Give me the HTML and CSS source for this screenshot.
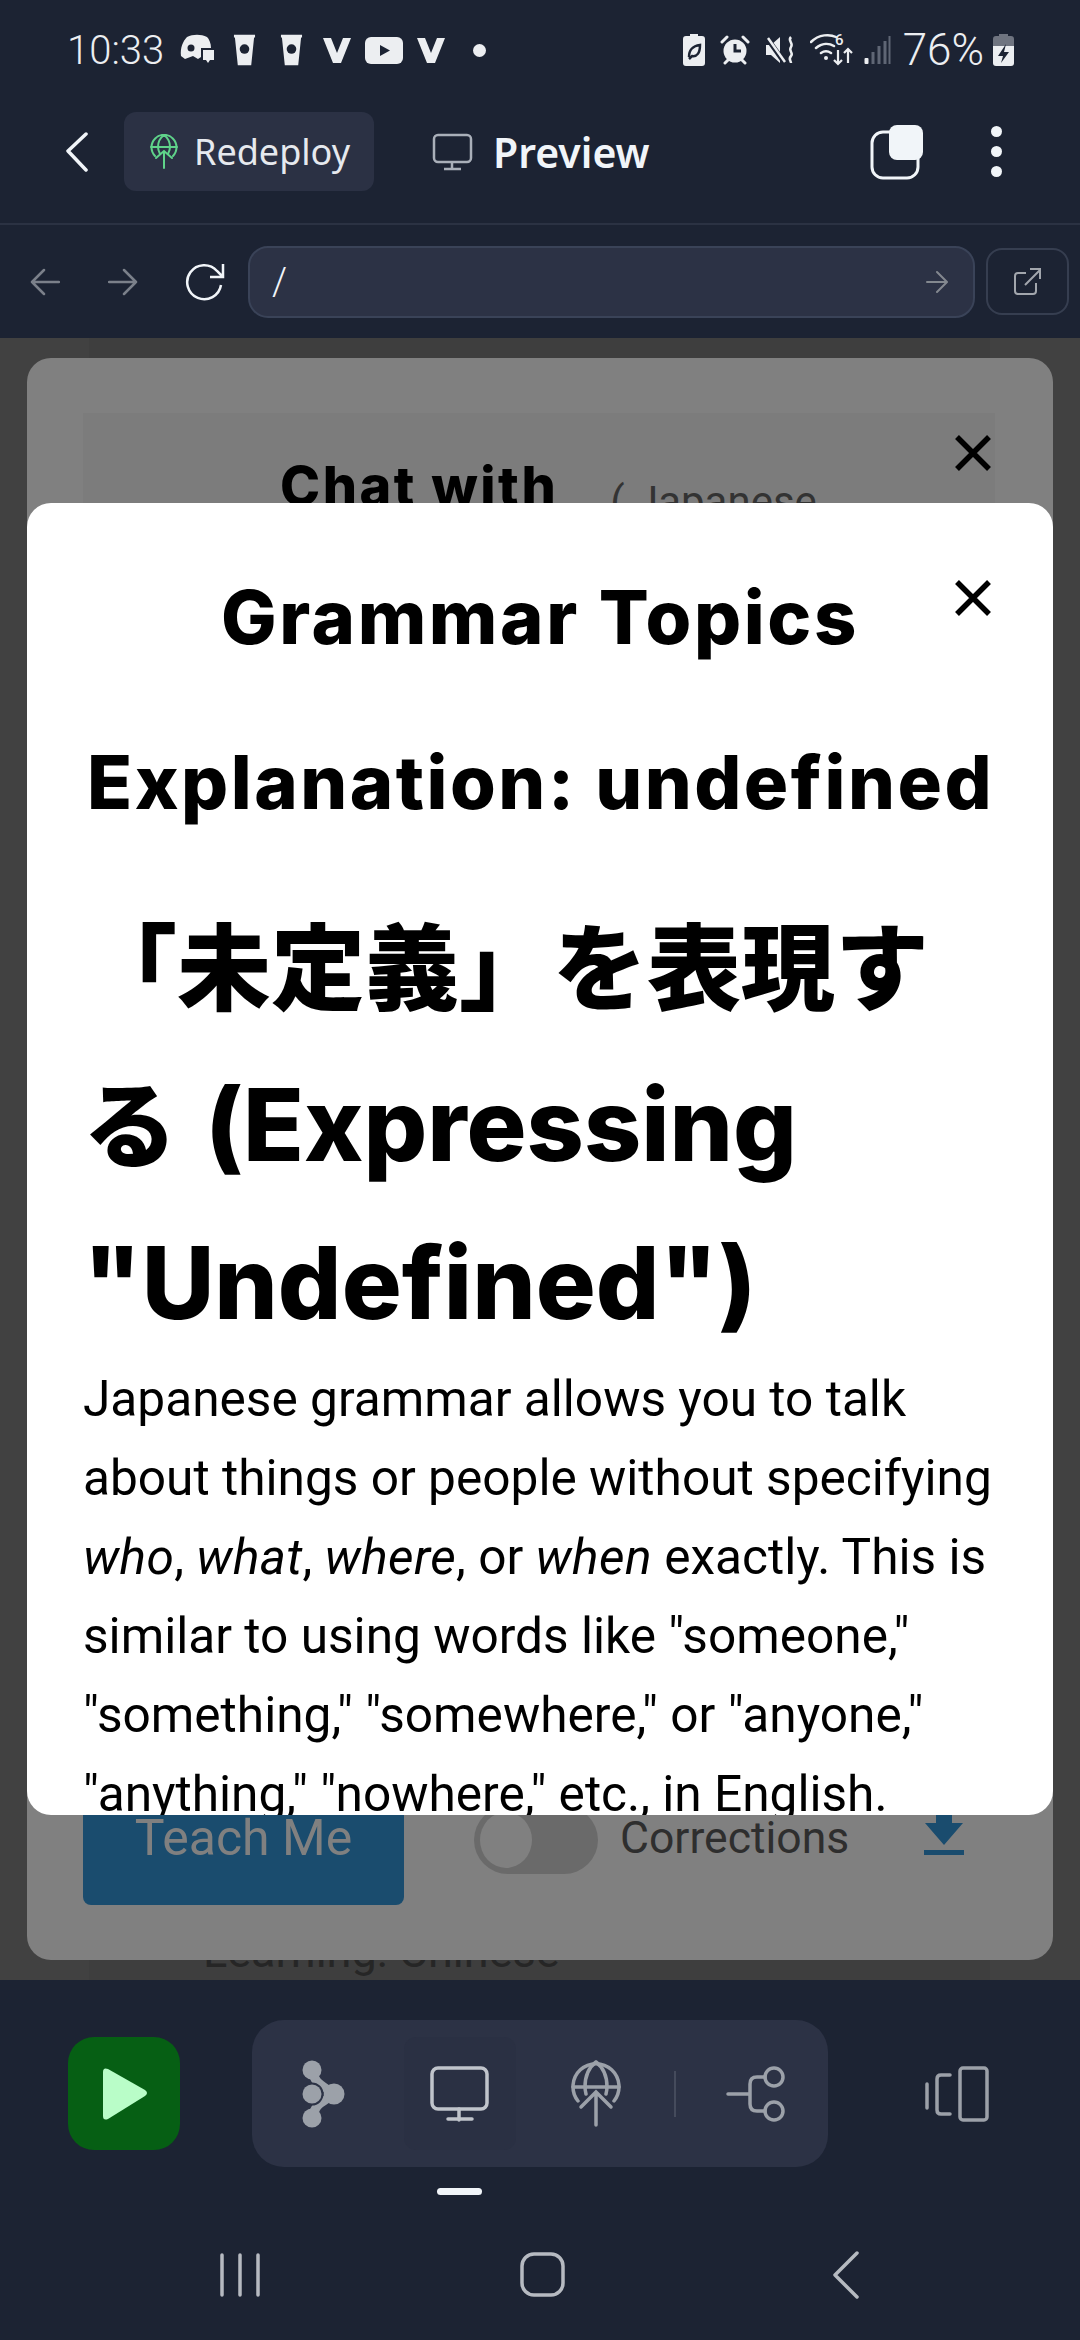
FILE: index.html
```html
<!DOCTYPE html>
<html lang="en">
<head>
  <meta charset="UTF-8" />
  <meta name="viewport" content="width=device-width, initial-scale=1.0" />
  <title>Grammar Topics</title>
  <link rel="stylesheet" href="styles.css">
</head>
<body>
  <div class="top">
    <div class="status">
      <span class="time">10:33</span>
      <div class="status-left">
        <svg width="34" height="32" viewBox="0 0 34 32"><path d="M7 3c6-3 14-3 20 0 2 2 4 6 4 11H21v9l-3 2-5-3-8 3-4-3C0 14 3 7 7 3z" fill="#eceef1"/><circle cx="11" cy="14" r="3.500" fill="#1c2333"/><path d="M23 16h11v10h-4l-2 3-2-3h-3z" fill="#eceef1"/></svg>
        <svg class="cup" width="23" height="34" viewBox="0 0 24 34"><path d="M1 1h22v3h-1l-3 29H5L2 4H1z" fill="#eceef1"/><circle cx="12" cy="16" r="5" fill="#1c2333"/></svg>
        <svg class="cup cup2" width="23" height="34" viewBox="0 0 24 34"><path d="M1 1h22v3h-1l-3 29H5L2 4H1z" fill="#eceef1"/><circle cx="12" cy="16" r="5" fill="#1c2333"/></svg>
        <svg class="vee" width="28" height="27" viewBox="0 0 28 27"><path d="M0 1h8l6 15 6-15h8L18 26h-8z" fill="#eceef1"/></svg>
        <svg width="38" height="27" viewBox="0 0 38 27"><rect width="38" height="27" rx="6" fill="#eceef1"/><path d="M15 8l10 5.500-10 5.500z" fill="#1c2333"/></svg>
        <svg width="28" height="27" viewBox="0 0 28 27"><path d="M0 1h8l6 15 6-15h8L18 26h-8z" fill="#eceef1"/></svg>
        <span class="dot"></span>
      </div>
      <div class="status-right">
        <svg width="22" height="32" viewBox="0 0 22 32"><path d="M7 0h8v2h4q3 0 3 3v24q0 3-3 3H3q-3 0-3-3V5q0-3 3-3h4z" fill="#eceef1"/><path d="M6 23c0-8 4-11 11-12 0 8-3 12-8 11l-3 3" fill="none" stroke="#1c2333" stroke-width="2.500"/></svg>
        <svg width="30" height="30" viewBox="0 0 30 30"><circle cx="15" cy="16" r="11.500" fill="#eceef1"/><path d="M15 9v7h6" fill="none" stroke="#1c2333" stroke-width="3"/><path d="M2 7l5-5M28 7l-5-5M5 28l3-3M25 28l-3-3" stroke="#eceef1" stroke-width="3" stroke-linecap="round"/></svg>
        <svg width="30" height="30" viewBox="0 0 30 30"><path d="M1 10h5l9-8v26l-9-8H1z" fill="#eceef1"/><path d="M2 3l17 24" stroke="#1c2333" stroke-width="5"/><path d="M3 3l17 24" stroke="#eceef1" stroke-width="2.500"/><path d="M26 2c-4 4 3 6 0 10s3 6 0 9 0 5 0 7" fill="none" stroke="#eceef1" stroke-width="2.500"/></svg>
        <svg class="wifi" width="44" height="34" viewBox="0 0 44 34"><path d="M1 9c8-8 19-8 25-5M6 15c6-5 13-5 18-2M11 20c3-2 7-2 10 0" fill="none" stroke="#eceef1" stroke-width="2.500" stroke-linecap="round"/><circle cx="16" cy="25" r="2" fill="#eceef1"/><text x="25" y="12" class="wifi-num">6</text><path d="M28 17v14m-4-4l4 4 4-4M38 30V16m-4 4l4-4 4 4" fill="none" stroke="#eceef1" stroke-width="2.200"/></svg>
        <svg class="signal" width="27" height="30" viewBox="0 0 26 30"><rect x="0" y="23" width="4" height="6" rx="1" fill="#eceef1"/><rect x="7" y="17" width="3" height="12" fill="#5f6675"/><rect x="13" y="11" width="3" height="18" fill="#5f6675"/><rect x="19" y="6" width="3" height="23" fill="#5f6675"/><rect x="24" y="1" width="2" height="28" fill="#5f6675"/></svg>
        <span class="pct">76%</span>
        <svg width="21" height="32" viewBox="0 0 21 32"><path d="M6 0h9v2h3q3 0 3 3v9H0V5q0-3 3-3h3z" fill="#6f7480"/><path d="M0 12h21v17q0 3-3 3H3q-3 0-3-3z" fill="#eceef1"/><path d="M13 10l-8 12h5l-2 7 8-11h-5z" fill="#1c2333"/></svg>
      </div>
    </div>

    <div class="header">
      <svg class="back" width="24" height="40" viewBox="0 0 24 40"><path d="M21 2L3 19l18 19" fill="none" stroke="#f1f5f9" stroke-width="3.500" stroke-linecap="round" stroke-linejoin="round"/></svg>
      <div class="redeploy">
        <svg width="28" height="36" viewBox="0 0 28 36"><g fill="none" stroke="#5fd38a" stroke-width="2" stroke-linecap="round"><path d="M5 22a12.500 12.500 0 1 1 18 0"/><path d="M1 13h26M14 1c-4 3-6 8-6 12 0 3 1 5 2 7M14 1c4 3 6 8 6 12 0 3-1 5-2 7"/><path d="M14 34V17M6 24l8-7 8 7"/></g></svg>
        <span>Redeploy</span>
      </div>
      <div class="preview">
        <svg width="42" height="38" viewBox="0 0 42 38"><rect x="2" y="2" width="37" height="27" rx="4" fill="none" stroke="#a9afb9" stroke-width="2.500"/><path d="M20 29v7M12 36h17" stroke="#a9afb9" stroke-width="2.500"/></svg>
        <span>Preview</span>
      </div>
      <div class="header-right">
        <svg width="54" height="56" viewBox="0 0 54 56"><rect x="2" y="8" width="46" height="46" rx="11" fill="none" stroke="#f1f5f9" stroke-width="3"/><rect x="19" y="1" width="34" height="35" rx="8" fill="#f1f5f9"/></svg>
        <div class="dots"><i></i><i></i><i></i></div>
      </div>
    </div>

    <div class="urlbar">
      <svg width="30" height="30" viewBox="0 0 30 30"><path d="M29 15H2M14 3L2 15l12 12" fill="none" stroke="#7b808a" stroke-width="2.500" stroke-linecap="round" stroke-linejoin="round"/></svg>
      <svg class="fwd" width="30" height="30" viewBox="0 0 30 30"><path d="M1 15h27M16 3l12 12-12 12" fill="none" stroke="#7b808a" stroke-width="2.500" stroke-linecap="round" stroke-linejoin="round"/></svg>
      <svg class="reload" width="42" height="38" viewBox="0 0 42 38"><path d="M37 22a17 17 0 1 1-4-14l6 6M39 1v13H26" fill="none" stroke="#f1f5f9" stroke-width="2.500"/></svg>
      <div class="address">
        <span>/</span>
        <svg width="22" height="24" viewBox="0 0 22 24"><path d="M1 12h19M11 2l10 10-10 10" fill="none" stroke="#83888f" stroke-width="2" stroke-linecap="round" stroke-linejoin="round"/></svg>
      </div>
      <div class="open-btn">
        <svg width="28" height="28" viewBox="0 0 28 28"><path d="M12 5H4q-3 0-3 3v15q0 3 3 3h15q3 0 3-3v-8M11 17L26 2M16 1h10v10" fill="none" stroke="#a2a6ad" stroke-width="2"/></svg>
      </div>
    </div>
  </div>

  <div class="stage">
    <div class="under-page"></div>
    <div class="under-text">Learning: Chinese</div>

    <div class="modal-back">
      <div class="back-inner">
        <span class="chat">Chat with</span>
        <span class="lang">( Japanese</span>
      </div>
      <svg class="close close-back" width="38" height="38" viewBox="0 0 38 38"><path d="M3 3l32 32M35 3L3 35" stroke="#000" stroke-width="5.500"/></svg>
      <div class="back-actions">
        <div class="teach">Teach Me</div>
        <div class="toggle"><span></span></div>
        <span class="corrections">Corrections</span>
        <svg class="download" width="40" height="50" viewBox="0 0 40 50"><path d="M12 0h16v17h11L20 39 1 17h11z" fill="#1a4c6e"/><rect y="44" width="40" height="5" fill="#1a4c6e"/></svg>
      </div>
    </div>

    <div class="modal-front">
      <svg class="close close-front" width="38" height="38" viewBox="0 0 38 38"><path d="M3 3l32 32M35 3L3 35" stroke="#000" stroke-width="5.500"/></svg>
      <div class="modal-title">Grammar Topics</div>
      <h2>Explanation: undefined</h2>
      <h1><span class="cjk">「未定義」を表現する</span> (Expressing "Undefined")</h1>
      <p>Japanese grammar allows you to talk about things or people without specifying <em>who</em>, <em>what</em>, <em>where</em>, or <em>when</em> exactly. This is similar to using words like "someone," "something," "somewhere," or "anyone," "anything," "nowhere," etc., in English.</p>
    </div>
  </div>

  <div class="bottom">
    <div class="tools">
      <div class="run">
        <svg width="50" height="54" viewBox="0 0 48 54"><path d="M3 5q0-5 5-3l37 21q4 3 0 6L8 52q-5 2-5-3z" fill="#b9fdc8"/></svg>
      </div>
      <div class="dock">
        <div class="dock-item">
          <svg width="44" height="68" viewBox="0 0 44 68"><g fill="#9ca1a9"><path d="M10 10C12 24 22 26 32 34 22 42 12 44 10 58" fill="none" stroke="#9ca1a9" stroke-width="9"/><circle cx="10" cy="10" r="9.500"/><circle cx="10" cy="58" r="9.500"/><circle cx="32" cy="34" r="10.500"/><circle cx="10" cy="34" r="9.500" stroke="#2c3245" stroke-width="4" paint-order="stroke"/></g></svg>
        </div>
        <div class="dock-item active">
          <svg width="60" height="56" viewBox="0 0 60 56"><rect x="2" y="2" width="55" height="41" rx="6" fill="none" stroke="#c0c4cb" stroke-width="3.500"/><path d="M29 43v11M18 53h24" stroke="#c0c4cb" stroke-width="3.500" stroke-linecap="round"/></svg>
        </div>
        <div class="dock-item">
          <svg width="50" height="68" viewBox="0 0 50 68"><g fill="none" stroke="#9ca1a9" stroke-width="3.500" stroke-linecap="round"><path d="M7 41a23 23 0 1 1 36 0"/><path d="M2 27h46M25 2c-8 6-11 15-11 25 0 3 .5 5 1 7M25 2c8 6 11 15 11 25 0 3-.5 5-1 7"/><path d="M25 65V32M10 47l15-15 15 15"/></g></svg>
        </div>
        <span class="dock-sep"></span>
        <div class="dock-item">
          <svg width="60" height="56" viewBox="0 0 60 56"><g fill="none" stroke="#9ca1a9" stroke-width="3.500" stroke-linecap="round"><circle cx="48" cy="11" r="9"/><circle cx="48" cy="45" r="9"/><path d="M39 11H31q-7 0-7 7v20q0 7 7 7h8M2 28h22"/></g></svg>
        </div>
      </div>
      <svg class="panels" width="64" height="56" viewBox="0 0 64 56"><g fill="none" stroke="#9ca1a9" stroke-width="3.500" stroke-linecap="round"><path d="M2 18v24"/><path d="M25 9h-9q-4 0-4 4v31q0 4 4 4h9" /><rect x="35" y="2" width="27" height="52" rx="3"/></g></svg>
    </div>
    <div class="home-pill"></div>
    <div class="navbar">
      <svg width="44" height="44" viewBox="0 0 44 44"><path d="M4 2v40M22 2v40M40 2v40" stroke="#b6bac1" stroke-width="3.500" stroke-linecap="round"/></svg>
      <svg class="nav-home" width="46" height="46" viewBox="0 0 46 46"><rect x="2" y="2" width="41" height="41" rx="12" fill="none" stroke="#b6bac1" stroke-width="3.500"/></svg>
      <svg class="nav-back" width="26" height="48" viewBox="0 0 26 48"><path d="M24 2L2 24l22 22" fill="none" stroke="#b6bac1" stroke-width="3.500" stroke-linecap="round" stroke-linejoin="round"/></svg>
    </div>
  </div>
</body>
</html>
```

FILE: styles.css
```css
* {
  box-sizing: border-box;
}
html, body {
  margin: 0;
  padding: 0;
}
body {
  width: 1080px;
  height: 2340px;
  overflow: hidden;
  background: #1c2333;
  font-family: Roboto, "Noto Sans CJK JP", sans-serif;
  display: flex;
  flex-direction: column;
}
svg {
  display: block;
  flex: none;
}

/* top chrome */
.top {
  height: 338px;
  flex: none;
  background: #1c2333;
}
.status {
  height: 80px;
  padding: 20px 66px 0 67px;
  display: flex;
  align-items: center;
  color: #eceef1;
}
.time {
  font-size: 40px;
  font-weight: 300;
  width: 113px;
}
.status-left {
  display: flex;
  align-items: center;
  gap: 14px;
}
.cup {
  margin-left: 5px;
}
.cup2 {
  margin-left: 10px;
}
.vee {
  margin-left: 6px;
}
.dot {
  width: 13px;
  height: 13px;
  border-radius: 50%;
  background: #eceef1;
  margin-left: 14px;
}
.status-right {
  margin-left: auto;
  display: flex;
  align-items: center;
  gap: 15px;
}
.wifi-num {
  font-size: 15px;
  font-weight: 500;
  fill: #eceef1;
}
.signal {
  margin-left: -5px;
}
.pct {
  font-size: 44px;
  font-weight: 300;
  margin: 0 -6px 0 -3px;
}
.header {
  height: 145px;
  border-bottom: 2px solid #2b3243;
  display: flex;
  align-items: center;
  padding: 0 78px 0 65px;
}
.redeploy {
  margin-left: 35px;
  width: 250px;
  height: 79px;
  background: #2b3144;
  border-radius: 12px;
  display: flex;
  align-items: center;
  gap: 16px;
  padding-left: 26px;
  color: #e6e9ee;
  font-family: "Noto Sans", sans-serif;
  font-size: 36px;
}
.preview {
  margin-left: 58px;
  display: flex;
  align-items: center;
  gap: 19px;
  color: #f1f5f9;
  font-family: "Noto Sans", sans-serif;
  font-size: 41px;
  font-weight: 600;
}
.header-right {
  margin-left: auto;
  display: flex;
  align-items: center;
}
.dots {
  margin-left: 67px;
  display: flex;
  flex-direction: column;
  gap: 9px;
}
.dots i {
  display: block;
  width: 11px;
  height: 11px;
  border-radius: 50%;
  background: #f1f5f9;
}
.urlbar {
  height: 113px;
  display: flex;
  align-items: center;
  padding: 0 0 0 30px;
}
.fwd {
  margin-left: 48px;
}
.reload {
  margin-left: 46px;
}
.address {
  margin-left: 22px;
  width: 727px;
  height: 72px;
  background: #2c3245;
  border: 2px solid #3a4358;
  border-radius: 20px;
  display: flex;
  align-items: center;
  justify-content: space-between;
  padding: 0 25px 0 22px;
  color: #f1f5f9;
  font-size: 38px;
  font-weight: 300;
}
.open-btn {
  margin-left: 11px;
  width: 83px;
  height: 67px;
  border: 2px solid #363e50;
  border-radius: 16px;
  display: flex;
  align-items: center;
  justify-content: center;
}

/* dimmed page */
.stage {
  position: relative;
  height: 1642px;
  flex: none;
  background: #414141;
  overflow: hidden;
}
.under-page {
  position: absolute;
  left: 89px;
  top: 0;
  width: 901px;
  height: 1642px;
  background: #3e3e3e;
}
.under-text {
  position: absolute;
  left: 203px;
  top: 1588px;
  font-size: 45px;
  line-height: 52px;
  color: #262626;
}
.modal-back {
  position: absolute;
  left: 27px;
  top: 20px;
  width: 1026px;
  height: 1602px;
  background: #808080;
  border-radius: 24px;
}
.back-inner {
  position: absolute;
  left: 56px;
  top: 55px;
  width: 912px;
  height: 200px;
  background: #7c7c7c;
  padding-left: 197px;
  display: flex;
  align-items: flex-start;
  gap: 52px;
}
.chat {
  font-family: Inter, sans-serif;
  font-weight: 800;
  font-size: 54px;
  line-height: 60px;
  letter-spacing: 2.500px;
  margin-top: 43px;
  color: #000;
}
.lang {
  font-size: 42px;
  line-height: 50px;
  margin-top: 64px;
  color: #333;
}
.close {
  position: absolute;
}
.close-back {
  left: 927px;
  top: 76px;
}
.back-actions {
  position: absolute;
  left: 56px;
  top: 1392px;
  display: flex;
  align-items: flex-start;
  height: 155px;
}
.teach {
  width: 321px;
  height: 155px;
  padding-top: 62px;
  background: #1a4c6e;
  border-radius: 8px;
  color: #808080;
  font-size: 50px;
  line-height: 52px;
  text-align: center;
}
.toggle {
  width: 124px;
  height: 68px;
  margin: 56px 0 0 70px;
  background: #6a6a6a;
  border-radius: 34px;
  padding: 6px;
}
.toggle span {
  display: block;
  width: 52px;
  height: 56px;
  border-radius: 50%;
  background: #808080;
}
.corrections {
  margin: 64px 0 0 22px;
  font-size: 44.500px;
  line-height: 48px;
  color: #2e2e2e;
}
.download {
  margin: 56px 0 0 75px;
}
.modal-front {
  position: absolute;
  left: 27px;
  top: 165px;
  width: 1026px;
  height: 1312px;
  background: #fff;
  border-radius: 24px;
  overflow: hidden;
  padding: 68px 56px 0;
  color: #000;
}
.close-front {
  left: 927px;
  top: 76px;
}
.modal-title {
  font-family: Inter, sans-serif;
  font-weight: 800;
  font-size: 74px;
  line-height: 92px;
  letter-spacing: 2.600px;
  text-align: center;
}
h2 {
  margin: 73px 0 0 4px;
  font-family: Inter, sans-serif;
  font-weight: 800;
  font-size: 74px;
  line-height: 92px;
  letter-spacing: 2.500px;
  white-space: nowrap;
}
h1 {
  margin: 60px 0 0;
  font-family: Inter, "Noto Sans CJK JP", sans-serif;
  font-weight: 800;
  font-size: 100px;
  line-height: 158px;
  word-spacing: 6px;
}
.cjk {
  font-size: 94px;
  line-height: 1;
}
p {
  margin: -2px 0 0;
  font-size: 49.600px;
  line-height: 79px;
}
em {
  font-style: italic;
  letter-spacing: 0.400px;
}

/* bottom chrome */
.bottom {
  flex: 1;
  background: #1c2333;
  display: flex;
  flex-direction: column;
}
.tools {
  height: 187px;
  padding: 40px 0 0 68px;
  display: flex;
  align-items: center;
}
.run {
  width: 112px;
  height: 113px;
  background: #065f14;
  border-radius: 26px;
  display: flex;
  align-items: center;
  justify-content: center;
}
.dock {
  margin-left: 72px;
  width: 576px;
  height: 147px;
  background: #2c3245;
  border-radius: 32px;
  display: flex;
  align-items: center;
  gap: 24px;
  padding-left: 16px;
}
.dock-item {
  width: 112px;
  height: 113px;
  display: flex;
  align-items: center;
  justify-content: center;
  border-radius: 12px;
}
.dock-item.active {
  background: #2a3043;
}
.dock-sep {
  width: 2px;
  height: 46px;
  margin-left: -2px;
  background: #454b5c;
}
.panels {
  margin-left: 97px;
}
.home-pill {
  width: 45px;
  height: 7px;
  border-radius: 4px;
  background: #f1f5f9;
  margin: 21px 0 0 437px;
}
.navbar {
  margin-top: 56px;
  padding-left: 218px;
  display: flex;
  align-items: center;
}
.nav-home {
  margin-left: 258px;
}
.nav-back {
  margin-left: 267px;
}
```
